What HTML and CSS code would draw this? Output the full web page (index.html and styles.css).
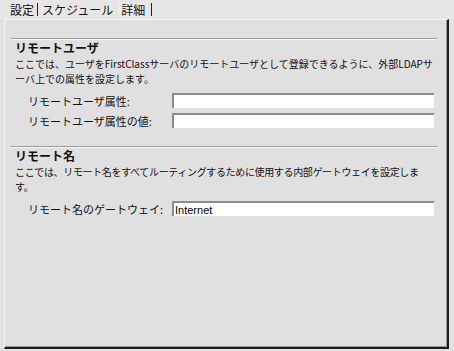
FILE: index.html
```html
<!DOCTYPE html>
<html>
<head>
  <title>詳細</title>
  <link rel="stylesheet" href="styles.css">
</head>
<body class="main">
  <div class="tabs">
    <span class="tab">設定</span><span class="bar"></span><span class="tab">スケジュール</span><span class="tab active">詳細</span><span class="bar"></span>
  </div>

  <div class="panel">
    <div class="sect">
      <div class="head">リモートユーザ</div>
      <p class="desc">ここでは、ユーザをFirstClassサーバのリモートユーザとして登録できるように、外部LDAPサ<br>ーバ上での属性を設定します。</p>
      <div class="row">
        <label>リモートユーザ属性:</label>
        <input type="text" class="fld">
      </div>
      <div class="row">
        <label>リモートユーザ属性の値:</label>
        <input type="text" class="fld">
      </div>
    </div>

    <div class="sect">
      <div class="head">リモート名</div>
      <p class="desc tight">ここでは、リモート名をすべてルーティングするために使用する内部ゲートウェイを設定しま<br>す。</p>
      <div class="row">
        <label>リモート名のゲートウェイ:</label>
        <input type="text" class="fld" value="Internet">
      </div>
    </div>
  </div>
</body>
</html>
```

FILE: styles.css
```css
.main {
  margin: 0;
  background: #e2e2e2;
  font-family: "Noto Sans CJK JP", "DejaVu Sans", sans-serif;
  font-size: 11px;
  color: #111;
  width: 454px;
  height: 351px;
  overflow: hidden;
}

.tabs {
  height: 19px;
  padding-left: 10px;
  display: flex;
  align-items: center;
  font-size: 12px;
  background: #e6e6e6;
}

.tab {
  line-height: 14px;
}

.bar {
  width: 1px;
  height: 13px;
  background: #222;
  margin: 0 4px 0 3px;
}

.active {
  margin-left: 5px;
  padding: 0 3px;
  background: #ebebeb;
}

.panel {
  box-sizing: border-box;
  margin: 0 5px 0 4px;
  height: 330px;
  background: #e0e0e0;
  border-left: 1px solid #f4f4f4;
  border-top: 1px solid #f4f4f4;
  border-right: 2px solid #1c1c1c;
  border-bottom: 2px solid #1c1c1c;
  box-shadow: inset -1px -1px 0 #9a9a9a;
  padding: 18px 10px 0 6px;
}

.sect {
  border-top: 1px solid #9c9c9c;
  box-shadow: inset 0 1px 0 #f6f6f6;
  padding: 1px 0 0 4px;
  margin-bottom: 18px;
}

.head {
  font-weight: bold;
  font-size: 12px;
  line-height: 15px;
}

.desc {
  margin: 1px 0 0;
  font-size: 10px;
  line-height: 15px;
  white-space: nowrap;
}

.tight {
  letter-spacing: -0.35px;
}

.row {
  display: flex;
  align-items: center;
  height: 15px;
  margin-top: 5px;
}

.desc + .row {
  margin-top: 7px;
}

.row label {
  box-sizing: border-box;
  width: 157px;
  padding-left: 13px;
  font-size: 11px;
}

.fld {
  width: 262px;
  height: 15px;
  box-sizing: border-box;
  border: none;
  border-top: 2px solid #8c8c8c;
  border-left: 2px solid #8c8c8c;
  background: #fff;
  font-family: "Liberation Sans", sans-serif;
  font-size: 11px;
  padding: 0 1px;
  margin: 0;
}
```
